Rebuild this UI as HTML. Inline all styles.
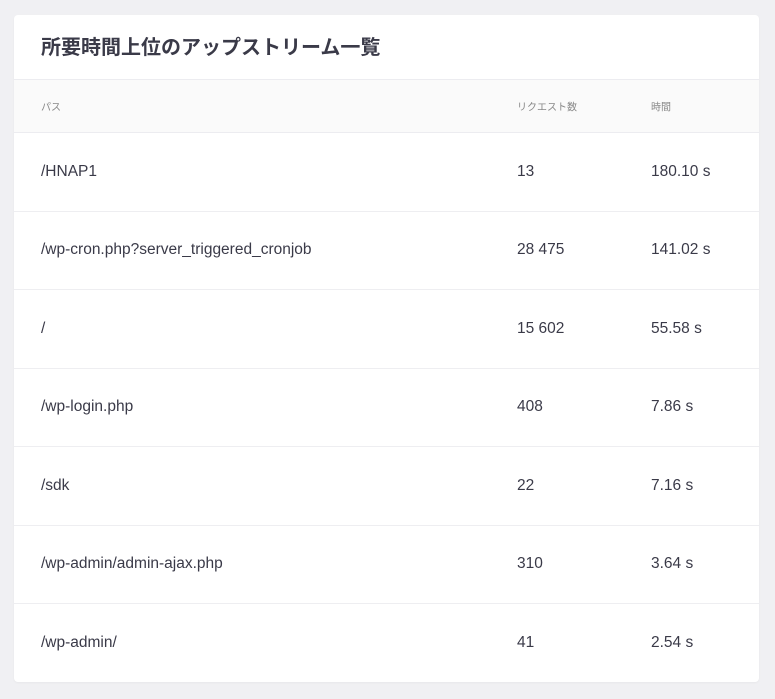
<!DOCTYPE html>
<html><head><meta charset="utf-8"><style>
body{margin:0;background:#f0f0f3;font-family:"Liberation Sans","Noto Sans CJK JP",sans-serif;color:#3a3a4a;}
.card{position:absolute;left:14px;top:15px;width:745px;height:667px;background:#fff;border-radius:4px;overflow:hidden;box-shadow:0 1px 2px rgba(0,0,0,.04);}
.title{height:64px;border-bottom:1px solid #ececf0;font-size:20px;font-weight:bold;line-height:66px;padding-left:27px;color:#3a3a48;}
.hdr{height:52px;background:#fafafa;border-bottom:1px solid #ececf0;font-size:10px;color:#888;position:relative;}
.row{height:77.5px;border-bottom:1px solid #eeeef1;position:relative;font-size:15.5px;color:#3a3a48;}
.row:last-child{border-bottom:none}
.c{position:absolute;top:50%;transform:translateY(-50%);}
.a{left:27px}.b{left:503px}.d{left:637px}
</style></head><body>
<div class="card">
<div class="title">所要時間上位のアップストリーム一覧</div>
<div class="hdr"><span class="c a">パス</span><span class="c b">リクエスト数</span><span class="c d">時間</span></div>
<div class="row"><span class="c a">/HNAP1</span><span class="c b">13</span><span class="c d">180.10 s</span></div>
<div class="row"><span class="c a">/wp-cron.php?server_triggered_cronjob</span><span class="c b">28 475</span><span class="c d">141.02 s</span></div>
<div class="row"><span class="c a">/</span><span class="c b">15 602</span><span class="c d">55.58 s</span></div>
<div class="row"><span class="c a">/wp-login.php</span><span class="c b">408</span><span class="c d">7.86 s</span></div>
<div class="row"><span class="c a">/sdk</span><span class="c b">22</span><span class="c d">7.16 s</span></div>
<div class="row"><span class="c a">/wp-admin/admin-ajax.php</span><span class="c b">310</span><span class="c d">3.64 s</span></div>
<div class="row"><span class="c a">/wp-admin/</span><span class="c b">41</span><span class="c d">2.54 s</span></div>
</div>
</body></html>
